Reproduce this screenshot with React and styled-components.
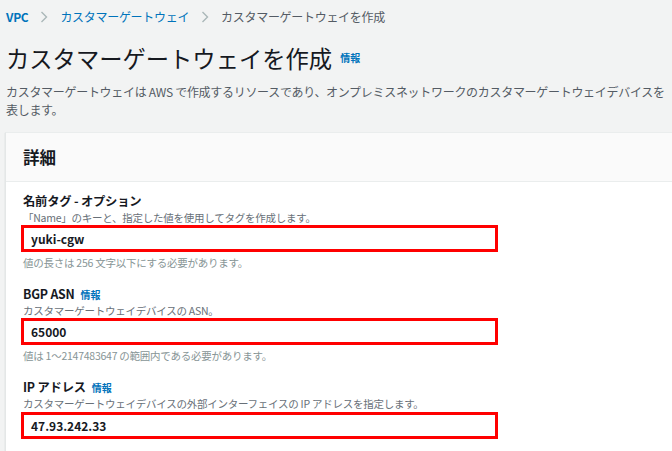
import React from "react";
import styled, { createGlobalStyle } from "styled-components";

const GlobalStyle = createGlobalStyle`
  html, body {
    margin: 0;
    padding: 0;
    background: #f2f3f3;
    overflow: hidden;
  }
  body {
    font-family: "Noto Sans CJK JP", "Noto Sans", sans-serif;
    color: #16191f;
  }
`;

const Page = styled.div`
  width: 672px;
  height: 451px;
  padding: 8px 0 0 6px;
  box-sizing: border-box;
  overflow: hidden;
`;

const Crumbs = styled.nav`
  display: flex;
  align-items: center;
  gap: 12px;
  height: 18px;
  font-size: 12px;
  line-height: 18px;
  letter-spacing: -0.3px;
`;

const Crumb = styled.span`
  color: ${(p) => (p.$current ? "#545b64" : "#0073bb")};
  font-weight: ${(p) => (p.$bold ? 700 : 400)};
`;

const Title = styled.h1`
  display: flex;
  align-items: center;
  margin: 16px 0 0;
  height: 32px;
  font-size: 23.3px;
  font-weight: 400;
  line-height: 32px;
  color: #16191f;
`;

const Info = styled.a`
  font-size: 10px;
  font-weight: 700;
  color: #0073bb;
  margin-left: ${(p) => p.$gap || 8}px;
  text-decoration: none;
  line-height: 1;
  letter-spacing: 0;
`;

const Lead = styled.p`
  margin: 9px 0 0;
  font-size: 12px;
  line-height: 18px;
  color: #545b64;
  white-space: nowrap;
  letter-spacing: -0.3px;
`;

const Panel = styled.section`
  margin: 13px -30px 0 -1px;
  background: #fff;
  border-left: 1px solid #e4e7e7;
  border-top: 1px solid #eaeded;
  box-shadow: 0 1px 1px rgba(0, 28, 36, 0.2);
`;

const PanelHead = styled.div`
  display: flex;
  align-items: center;
  height: 48px;
  padding-left: 17px;
  background: #fafafa;
  border-bottom: 1px solid #eaeded;
  font-size: 16.5px;
  font-weight: 700;
`;

const PanelBody = styled.div`
  padding: 12px 0 20px 15px;
`;

const Field = styled.div`
  display: flex;
  flex-direction: column;
  & + & {
    margin-top: 17px;
  }
`;

const Label = styled.div`
  display: flex;
  align-items: center;
  margin-left: 2px;
  font-size: 12.3px;
  font-weight: 700;
  line-height: 15px;
  color: #16191f;
  letter-spacing: -0.2px;
`;

const Hint = styled.div`
  margin-left: 2px;
  font-size: 10.5px;
  line-height: 14px;
  color: ${(p) => (p.$soft ? "#879596" : "#687078")};
  margin-top: ${(p) => p.$top ?? 2}px;
  letter-spacing: -0.25px;
`;

const Box = styled.div`
  display: flex;
  align-items: center;
  width: 477px;
  height: 27px;
  box-sizing: border-box;
  margin-top: ${(p) => p.$top ?? 0}px;
  padding-left: 7px;
  border: 3px solid #ff0000;
  background: #fff;
  font-size: 12px;
  font-weight: 700;
  color: #16191f;
`;

const Chevron = () => (
  <svg width="8" height="12" viewBox="0 0 8 12" fill="none">
    <path d="M1.5 1 L6.5 6 L1.5 11" stroke="#aab7b8" strokeWidth="1.4" />
  </svg>
);

export default function App() {
  return (
    <Page>
      <GlobalStyle />
      <Crumbs>
        <Crumb $bold>VPC</Crumb>
        <Chevron />
        <Crumb>カスタマーゲートウェイ</Crumb>
        <Chevron />
        <Crumb $current>カスタマーゲートウェイを作成</Crumb>
      </Crumbs>
      <Title>
        カスタマーゲートウェイを作成
        <Info $gap={8}>情報</Info>
      </Title>
      <Lead>
        カスタマーゲートウェイは AWS で作成するリソースであり、オンプレミスネットワークのカスタマーゲートウェイデバイスを
        <br />
        表します。
      </Lead>
      <Panel>
        <PanelHead>詳細</PanelHead>
        <PanelBody>
          <Field>
            <Label>名前タグ - オプション</Label>
            <Hint>「Name」のキーと、指定した値を使用してタグを作成します。</Hint>
            <Box>yuki-cgw</Box>
            <Hint $soft $top={4}>値の長さは 256 文字以下にする必要があります。</Hint>
          </Field>
          <Field>
            <Label>
              BGP ASN
              <Info $gap={6}>情報</Info>
            </Label>
            <Hint>カスタマーゲートウェイデバイスの ASN。</Hint>
            <Box>65000</Box>
            <Hint $soft $top={4}>値は 1〜2147483647 の範囲内である必要があります。</Hint>
          </Field>
          <Field>
            <Label>
              IP アドレス
              <Info $gap={6}>情報</Info>
            </Label>
            <Hint>カスタマーゲートウェイデバイスの外部インターフェイスの IP アドレスを指定します。</Hint>
            <Box $top={1}>47.93.242.33</Box>
          </Field>
        </PanelBody>
      </Panel>
    </Page>
  );
}
